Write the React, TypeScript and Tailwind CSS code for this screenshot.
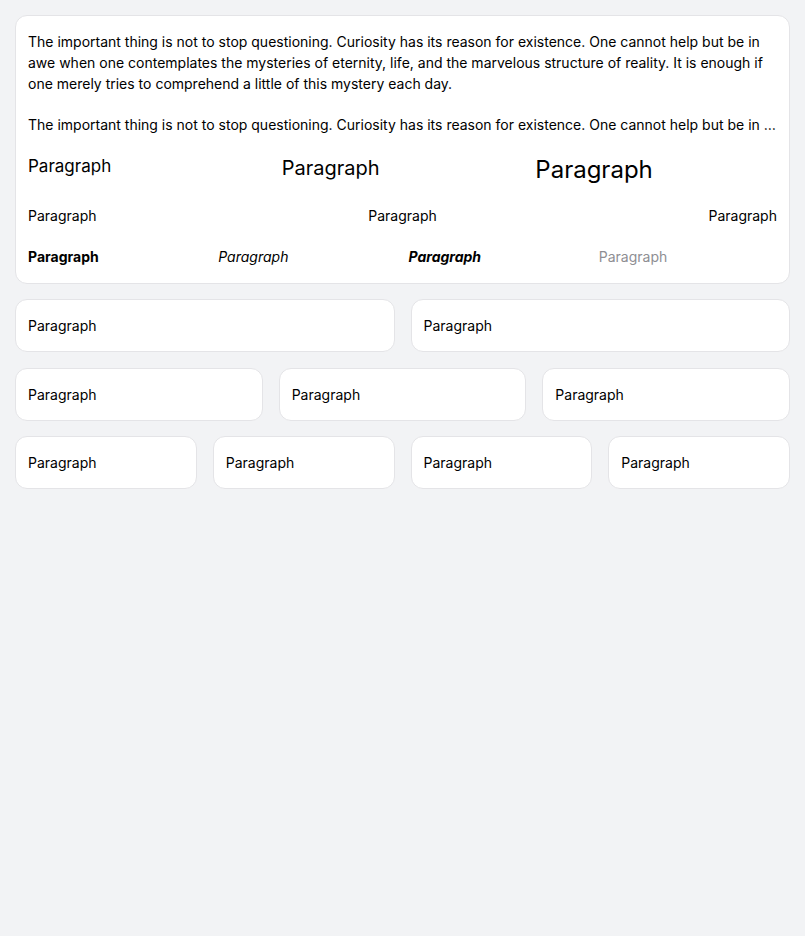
const quote =
  "The important thing is not to stop questioning. Curiosity has its reason for existence. One cannot help but be in awe when one contemplates the mysteries of eternity, life, and the marvelous structure of reality. It is enough if one merely tries to comprehend a little of this mystery each day.";

function Card({ children, className = "" }: { children: React.ReactNode; className?: string }) {
  return (
    <div className={`bg-white border border-[#e4e4e7] rounded-xl px-3 py-[15px] ${className}`}>
      {children}
    </div>
  );
}

export default function App() {
  return (
    <div
      className="min-h-[936px] bg-[#f2f3f5] px-[15px] py-[15px] text-black text-[14px] leading-[21px]"
      style={{ fontFamily: "Inter, 'Noto Sans', sans-serif" }}
    >
      <Card className="pb-4">
        <p>{quote}</p>
        <p className="mt-5 truncate">{quote}</p>

        <div className="mt-[21px] grid grid-cols-3 gap-3 items-start">
          <p className="text-[17px] leading-[1.2]">Paragraph</p>
          <p className="text-[20px] leading-[1.2]">Paragraph</p>
          <p className="text-[24px] leading-[1.2]">Paragraph</p>
        </div>

        <div className="mt-5 flex justify-between">
          <p>Paragraph</p>
          <p>Paragraph</p>
          <p>Paragraph</p>
        </div>

        <div className="mt-5 grid grid-cols-4 gap-3">
          <p className="font-bold">Paragraph</p>
          <p className="italic">Paragraph</p>
          <p className="font-bold italic">Paragraph</p>
          <p className="text-[#8e8e93]">Paragraph</p>
        </div>
      </Card>

      <div className="mt-[15px] grid grid-cols-2 gap-4">
        <Card>Paragraph</Card>
        <Card>Paragraph</Card>
      </div>

      <div className="mt-4 grid grid-cols-3 gap-4">
        <Card>Paragraph</Card>
        <Card>Paragraph</Card>
        <Card>Paragraph</Card>
      </div>

      <div className="mt-[15px] grid grid-cols-4 gap-4">
        <Card>Paragraph</Card>
        <Card>Paragraph</Card>
        <Card>Paragraph</Card>
        <Card>Paragraph</Card>
      </div>
    </div>
  );
}
